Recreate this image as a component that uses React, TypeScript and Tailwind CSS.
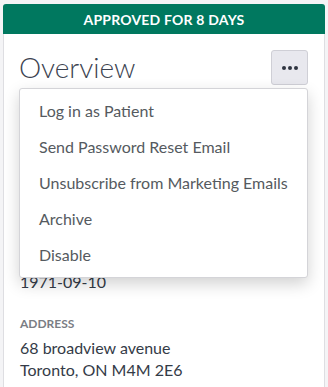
import React from "react";

const fields: { label: string; lines: string[]; hidden?: boolean }[] = [
  { label: "Name", lines: ["Jane Doe"], hidden: true },
  { label: "Email", lines: ["jane.doe@example.com"], hidden: true },
  { label: "Date of Birth", lines: ["1971-09-10"] },
  { label: "Address", lines: ["68 broadview avenue", "Toronto, ON M4M 2E6"] },
];

const menu = [
  "Log in as Patient",
  "Send Password Reset Email",
  "Unsubscribe from Marketing Emails",
  "Archive",
  "Disable",
];

export default function App() {
  return (
    <div
      className="w-[328px] h-[387px] overflow-hidden bg-[#f4f4f6] pt-1 px-[3px]"
      style={{ fontFamily: "Lato, 'Open Sans', sans-serif" }}
    >
      <div className="relative bg-white border border-[#dedee2] border-t-0 rounded-t-[3px] h-[400px]">
        <div className="h-[30px] bg-[#00785f] rounded-t-[3px] flex items-center justify-center text-white text-[14px] font-bold tracking-[0.2px] -mx-px">
          APPROVED FOR 8 DAYS
        </div>
        <div className="px-4">
          <div className="relative flex items-center justify-between mt-4">
            <h1 className="text-[28px] font-light text-[#3c4350] leading-[35px] -ml-px">
              Overview
            </h1>
            <button className="w-[37px] h-[35px] rounded-[3px] bg-[#e8e8ee] border border-[#cfcfd6] flex items-center justify-center">
              <span className="flex gap-[2px]">
                <span className="w-[4px] h-[4px] rounded-full bg-[#2f3440]" />
                <span className="w-[4px] h-[4px] rounded-full bg-[#2f3440]" />
                <span className="w-[4px] h-[4px] rounded-full bg-[#2f3440]" />
              </span>
            </button>
            <div className="absolute left-[-1px] right-0 top-[38px] z-10 bg-white border border-[#d4d4d8] rounded-[3px] py-1 shadow-[0_6px_16px_rgba(0,0,0,0.18)]">
              {menu.map((m) => (
                <div
                  key={m}
                  className="h-9 flex items-center px-[19px] text-[16px] text-[#555a60]"
                >
                  {m}
                </div>
              ))}
            </div>
          </div>
          <div className="mt-[34px] flex flex-col gap-[21px]">
            {fields.map((f) => (
              <div
                key={f.label}
                className={
                  f.hidden
                    ? "flex flex-col invisible"
                    : f.label === "Address"
                    ? "flex flex-col mt-px"
                    : "flex flex-col"
                }
              >
                <div
                  className={
                    f.label === "Date of Birth"
                      ? "text-[12px] font-bold uppercase text-[#7a7d84] leading-[18px] invisible"
                      : "text-[12px] font-bold uppercase text-[#7a7d84] leading-[18px]"
                  }
                >
                  {f.label}
                </div>
                <div className="mt-[4px] text-[16px] text-[#343b47] leading-[22px]">
                  {f.lines.map((l) => (
                    <div key={l}>{l}</div>
                  ))}
                </div>
              </div>
            ))}
          </div>
        </div>
      </div>
    </div>
  );
}
